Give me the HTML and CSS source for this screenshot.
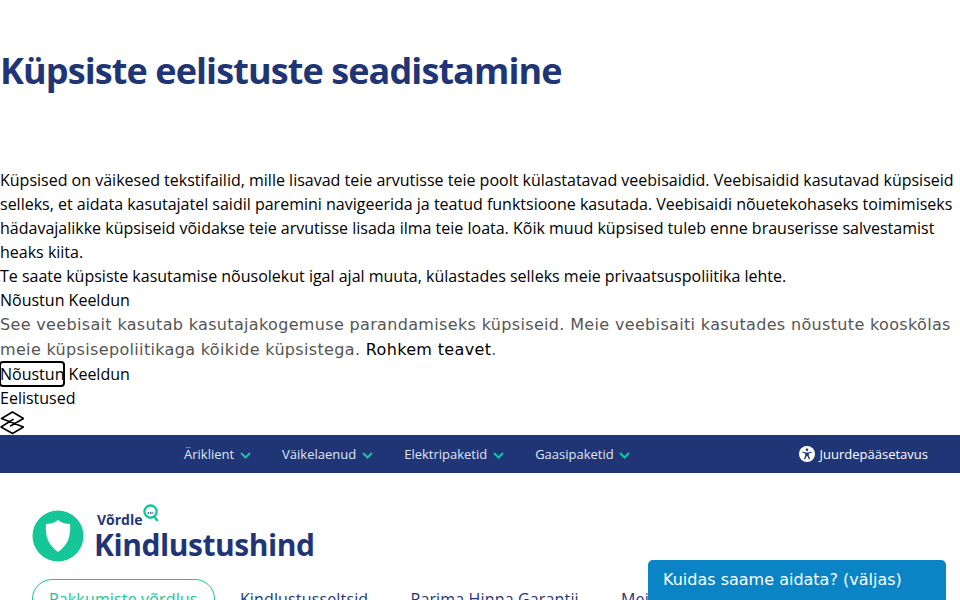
FILE: index.html
```html
<!DOCTYPE html>
<html lang="et">
<head>
    <meta charset="UTF-8">
    <meta name="viewport" content="width=device-width, initial-scale=1.0">
    <title>Kindlustushind</title>
    <link rel="stylesheet" href="styles.css">
</head>
<body>
    <section class="cookie-prefs">
        <h1>Küpsiste eelistuste seadistamine</h1>
        <p>Küpsised on väikesed tekstifailid, mille lisavad teie arvutisse teie poolt külastatavad veebisaidid. Veebisaidid kasutavad küpsiseid selleks, et aidata kasutajatel saidil paremini navigeerida ja teatud funktsioone kasutada. Veebisaidi nõuetekohaseks toimimiseks hädavajalikke küpsiseid võidakse teie arvutisse lisada ilma teie loata. Kõik muud küpsised tuleb enne brauserisse salvestamist heaks kiita.</p>
        <p>Te saate küpsiste kasutamise nõusolekut igal ajal muuta, külastades selleks meie privaatsuspoliitika lehte.</p>
        <div class="plain-row"><button>Nõustun</button> <button>Keeldun</button></div>
    </section>

    <section class="cookie-bar">
        <p class="cookie-text">See veebisait kasutab kasutajakogemuse parandamiseks küpsiseid. Meie veebisaiti kasutades nõustute kooskõlas meie küpsisepoliitikaga kõikide küpsistega. <a href="#">Rohkem teavet</a>.</p>
        <div class="plain-row"><button class="focused">Nõustun</button> <button>Keeldun</button></div>
        <div class="plain-row"><button>Eelistused</button></div>
        <svg class="stack-icon" width="24" height="24" viewBox="0 0 24 24" fill="none" stroke="#000" stroke-width="1.500" stroke-linejoin="round" stroke-linecap="round">
            <path d="M10.500 15 23.500 7.500 12.500 1 1.500 7.500 23.500 16 12.500 22.500 1 16 13 8.500"/>
        </svg>
    </section>

    <nav class="topbar">
        <ul class="topbar-menu">
            <li>Äriklient <svg class="chev" width="11" height="7" viewBox="0 0 11 7"><path d="M1 1l4.500 4.500L10 1" fill="none" stroke="#14c4a2" stroke-width="2"/></svg></li>
            <li>Väikelaenud <svg class="chev" width="11" height="7" viewBox="0 0 11 7"><path d="M1 1l4.500 4.500L10 1" fill="none" stroke="#14c4a2" stroke-width="2"/></svg></li>
            <li>Elektripaketid <svg class="chev" width="11" height="7" viewBox="0 0 11 7"><path d="M1 1l4.500 4.500L10 1" fill="none" stroke="#14c4a2" stroke-width="2"/></svg></li>
            <li>Gaasipaketid <svg class="chev" width="11" height="7" viewBox="0 0 11 7"><path d="M1 1l4.500 4.500L10 1" fill="none" stroke="#14c4a2" stroke-width="2"/></svg></li>
        </ul>
        <div class="access">
            <svg width="16" height="16" viewBox="0 0 16 16">
                <circle cx="8" cy="8" r="8" fill="#fff"/>
                <circle cx="8" cy="3.700" r="1.300" fill="#1f3576"/>
                <path d="M3.500 5.600 6.500 6.400H9.500L12.500 5.600 12.800 6.600 9.800 7.500V9.500L11 13 10 13.400 8.300 10H7.700L6 13.400 5 13 6.200 9.500V7.500L3.200 6.600Z" fill="#1f3576"/>
            </svg>
            Juurdepääsetavus
        </div>
    </nav>

    <header class="site-head">
        <a class="logo" href="#">
            <svg width="52" height="52" viewBox="0 0 52 52">
                <circle cx="26" cy="26" r="25.500" fill="#14c698"/>
                <path d="M26 10C30 13 34 14 38 14 39 26 36 35 26 42 16 35 13 26 14 14 18 14 22 13 26 10Z" fill="#fff"/>
            </svg>
            <div class="logo-words">
                <div class="logo-small">Võrdle
                    <svg class="lens" width="16" height="19" viewBox="0 0 17 20" fill="none">
                        <circle cx="8" cy="8" r="6.500" stroke="#14c698" stroke-width="2.500"/>
                        <path d="M12 13l3.500 5" stroke="#14c698" stroke-width="2.500"/>
                        <path d="M5 9.500h6" stroke="#1f3576" stroke-width="1.500" stroke-dasharray="1.500 1"/>
                    </svg>
                </div>
                <div class="logo-big">Kindlustushind</div>
            </div>
        </a>
        <ul class="main-menu">
            <li class="active">Pakkumiste võrdlus</li>
            <li>Kindlustusseltsid</li>
            <li>Parima Hinna Garantii</li>
            <li>Meist</li>
        </ul>
    </header>

    <div class="chat-tab">Kuidas saame aidata? (väljas)</div>
</body>
</html>
```
FILE: styles.css
```css
html, body { height: 600px; overflow: hidden; }
body { margin: 0; background-color: #fff; color: #000; font-family: "Open Sans", sans-serif; font-size: 16px; line-height: 24px; }
button { display: inline; background: none; border: none; padding: 0; margin: 0; font: inherit; color: inherit; }

.cookie-prefs { padding-top: 47px; }
h1 { margin: 0 0 73px; font-size: 36px; line-height: 48px; font-weight: 700; letter-spacing: -0.9px; color: #1f3576; }
.cookie-prefs p { margin: 0; }

.cookie-text { margin: 0; font-family: "DejaVu Sans", sans-serif; font-size: 16px; line-height: 25px; letter-spacing: 0.34px; color: #555; }
.cookie-text a { color: #000; text-decoration: none; }
.focused { outline: 2px solid #000; outline-offset: -1px; border-radius: 3px; }
.stack-icon { display: block; margin-top: 1px; }

.topbar { display: flex; justify-content: space-between; align-items: center; height: 38px; padding: 0 32px 0 184px; background-color: #1f3576; color: #dfe6f5; font-size: 13px; }
.topbar-menu { display: flex; gap: 31.6px; list-style: none; margin: 0; padding: 0; }
.chev { margin-left: 2px; }
.access { display: flex; align-items: center; gap: 5px; color: #fff; }

.site-head { padding: 37px 32px 0; }
.logo { display: flex; align-items: center; gap: 10px; text-decoration: none; color: #1f3576; }
.logo-words { display: flex; flex-direction: column; margin-top: -2px; }
.logo-small { display: flex; align-items: flex-start; font-size: 14px; line-height: 20px; font-weight: 700; margin-left: 3px; height: 20px; }
.lens { margin: -6px 0 0 0; }
.logo-big { font-size: 30px; line-height: 30px; font-weight: 700; letter-spacing: -0.45px; }
.main-menu { display: flex; gap: 8.3px; list-style: none; margin: 17px 0 0; padding: 0; color: #1f3576; font-size: 16px; letter-spacing: 0.15px; }
.main-menu li { padding: 7px 16px; border: 1px solid transparent; white-space: nowrap; }
.main-menu .active { border-color: #14c698; border-radius: 24px; color: #14c698; }

.chat-tab { position: fixed; left: 648px; top: 560px; width: 268px; height: 40px; padding: 8px 15px 0; border-radius: 5px 5px 0 0; background-color: #0a84c4; color: #fff; font-family: "DejaVu Sans", sans-serif; font-size: 16px; }
```
